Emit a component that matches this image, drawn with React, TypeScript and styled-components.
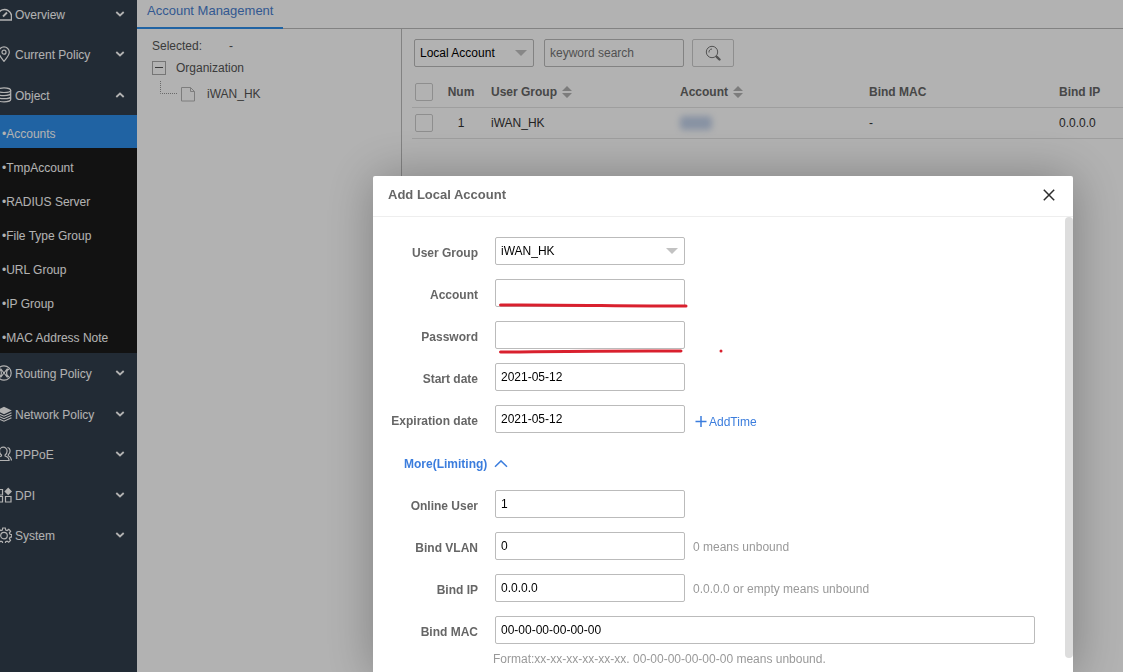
import React from "react";
import styled, { createGlobalStyle } from "styled-components";

const GlobalStyle = createGlobalStyle`
  *, *::before, *::after { box-sizing: border-box; }
  body {
    margin: 0;
    overflow: hidden;
    background: #fff;
    color: #555;
    font: 12px/18px "Liberation Sans", Arial, sans-serif;
  }
  button, input, select { font: inherit; }
  ul { list-style: none; margin: 0; padding: 0; }
`;

const Page = styled.div`
  display: flex;
  height: 100vh;
`;

/* ---------- sidebar ---------- */

const Sidebar = styled.nav`
  flex: 0 0 137px;
  overflow: hidden;
  background: #323e4c;
`;

const Menu = styled.ul`
  margin: -6px 0 0 -4px;
`;

const MenuItem = styled.li`
  &:nth-child(2n + 3) > button { height: 41px; }
`;

const MenuButton = styled.button`
  display: flex;
  align-items: center;
  width: 100%;
  height: 40px;
  padding: 0 12px 0 0;
  border: 0;
  background: none;
  color: #fff;
  text-align: left;
  cursor: pointer;
`;

const MenuLabel = styled.span`
  flex: 1;
  padding: 2px 0 0 3px;
`;

const SubMenu = styled.ul`
  background: #1a1a1a;
`;

const SubItem = styled.li`
  height: 34px;
`;

const SubLink = styled.a<{ $active?: boolean }>`
  display: flex;
  align-items: center;
  height: 33px;
  padding: 4px 0 0 6px;
  background: ${(p) => (p.$active ? "#2e8fea" : "transparent")};
  color: #fff;
  text-decoration: none;
`;

const Glyph = styled.svg`
  flex: none;
  display: block;
  fill: none;
  stroke: currentColor;
`;

/* ---------- main area ---------- */

const Main = styled.main`
  flex: 1;
  min-width: 0;
  display: flex;
  flex-direction: column;
`;

const TabBar = styled.div`
  height: 29px;
  border-bottom: 1px solid #bbb;
`;

const Tab = styled.a`
  display: inline-block;
  height: 29px;
  padding: 2px 10px 0;
  border-bottom: 2px solid #2e8fea;
  color: #4a7fd0;
  font-size: 13px;
  text-decoration: none;
`;

const Columns = styled.div`
  flex: 1;
  display: flex;
  min-height: 0;
`;

const TreePanel = styled.aside`
  flex: 0 0 265px;
  padding: 8px 15px;
  border-right: 1px solid #bbb;
`;

const Selected = styled.div`
  display: flex;
  gap: 27px;
`;

const TreeRow = styled.div<{ $child?: boolean }>`
  display: flex;
  align-items: center;
  gap: ${(p) => (p.$child ? "12px" : "10px")};
  height: 26px;
  padding-left: ${(p) => (p.$child ? "7px" : "0")};
`;

const ChildIcons = styled.span`
  display: flex;
  gap: 4px;
`;

const ListPanel = styled.section`
  flex: 1;
  min-width: 0;
  overflow: hidden;
  padding: 10px 0 0 10px;
`;

const Toolbar = styled.form`
  display: flex;
  gap: 10px;
  padding: 0 0 10px 2px;
`;

const Field = styled.input<{ $w?: number }>`
  width: ${(p) => p.$w ?? 190}px;
  height: 28px;
  padding: 0 5px;
  border: 1px solid #bbb;
  border-radius: 2px;
  outline: 0;
  background: #fff;
  color: #000;
  &::placeholder { color: #757575; opacity: 1; }
`;

const SelectBox = styled.div<{ $w: number }>`
  display: grid;
  width: ${(p) => p.$w}px;
  > * { grid-area: 1 / 1; }
  > svg { align-self: center; justify-self: end; margin-right: 7px; pointer-events: none; }
`;

const Select = styled.select`
  width: 100%;
  height: 28px;
  padding: 0 5px;
  appearance: none;
  border: 1px solid #bbb;
  border-radius: 2px;
  background: #fff;
  color: #000;
`;

const SearchButton = styled.button`
  display: flex;
  align-items: center;
  justify-content: center;
  width: 42px;
  height: 28px;
  margin-left: -2px;
  padding: 0;
  border: 1px solid #ccc;
  border-radius: 2px;
  background: #fff;
  color: #777;
`;

const Table = styled.table`
  width: 100%;
  min-width: 827px;
  table-layout: fixed;
  border-collapse: separate;
  border-spacing: 0;
`;

const Col = styled.col<{ $w: number }>`
  width: ${(p) => p.$w}px;
`;

const cell = `
  height: 31px;
  padding: 0 8px;
  border-bottom: 1px solid #e2e2e2;
  text-align: left;
  white-space: nowrap;
  &:first-child { padding: 0 3px; }
  &:nth-child(2) { padding: 0; text-align: center; }
`;
const Th = styled.th`${cell} color: #666;`;
const Td = styled.td`${cell} color: #333;`;

const SortLabel = styled.span`
  display: inline-flex;
  align-items: center;
  gap: 5px;
`;

const Check = styled.input`
  display: block;
  appearance: none;
  width: 18px;
  height: 18px;
  margin: 0;
  border: 1px solid #ccc;
  border-radius: 2px;
  background: #fff;
`;

const Redacted = styled.span`
  display: block;
  width: 32px;
  height: 14px;
  border-radius: 4px;
  background: #c3d2ea;
  filter: blur(3px);
`;

/* ---------- dialog ---------- */

const Overlay = styled.div`
  position: fixed;
  inset: 0;
  display: flex;
  justify-content: flex-end;
  padding: 176px 50px 0;
  overflow: hidden;
  background: rgba(0, 0, 0, 0.3);
`;

const Dialog = styled.section`
  display: flex;
  flex-direction: column;
  width: 700px;
  min-height: 500px;
  border-radius: 2px;
  background: #fff;
  box-shadow: 1px 1px 50px rgba(0, 0, 0, 0.3);
`;

const DialogHeader = styled.header`
  display: flex;
  align-items: center;
  justify-content: space-between;
  height: 41px;
  padding: 0 17px 2px 15px;
  border-bottom: 1px solid #eee;
`;

const DialogTitle = styled.h2`
  margin: 0;
  color: #666;
  font-size: 13px;
`;

const CloseButton = styled.button`
  display: flex;
  padding: 0;
  border: 0;
  background: none;
  color: #2d2d2d;
`;

const DialogBody = styled.div`
  position: relative;
  flex: 1;
  padding-top: 20px;
`;

const ScrollThumb = styled.div`
  position: absolute;
  top: 0;
  right: 0;
  width: 8px;
  height: 441px;
  border-radius: 4px;
  background: #ddd;
`;

const Marks = styled.svg`
  position: absolute;
  top: 80px;
  left: 120px;
  pointer-events: none;
`;

const Row = styled.div`
  display: flex;
  align-items: center;
  height: 28px;
  margin-bottom: 14px;
`;

const Label = styled.label`
  width: 105px;
  margin-right: 17px;
  padding-top: 4px;
  color: #666;
  font-weight: bold;
  text-align: right;
`;

const Hint = styled.span`
  padding: 2px 0 0 8px;
  color: #999;
`;

const Note = styled.p`
  margin: -8px 0 0 120px;
  color: #999;
`;

const AddTime = styled.button`
  display: flex;
  align-items: center;
  gap: 2px;
  padding: 6px 0 0 10px;
  border: 0;
  background: none;
  color: #3b7ddd;
`;

const More = styled.button`
  display: flex;
  align-items: center;
  gap: 7px;
  height: 29px;
  margin: 0 0 14px 31px;
  padding: 4px 0 0;
  border: 0;
  background: none;
  color: #3b7ddd;
  font-weight: bold;
`;

/* ---------- icons ---------- */

const icons: Record<string, React.ReactNode> = {
  Overview: (
    <>
      <path d="M2.500 14A7 7 0 1 1 15.500 9.500V14Z" strokeWidth="1.500" />
      <path d="M7 10.500L11 6.500" strokeWidth="1.800" />
    </>
  ),
  "Current Policy": (
    <>
      <path d="M8 15.300C5 11.700 2.700 9 2.700 6.200a5.300 5.300 0 0 1 10.600 0c0 2.800-2.300 5.500-5.300 9.100Z" />
      <circle cx="8" cy="6.200" r="2" />
    </>
  ),
  Object: (
    <>
      <ellipse cx="8" cy="3.200" rx="6.700" ry="2.300" />
      <path d="M1.300 3.200v9.300c0 1.300 2.900 2.300 6.700 2.300s6.700-1 6.700-2.300V3.200M1.300 6.300c0 1.300 2.900 2.300 6.700 2.300s6.700-1 6.700-2.300M1.300 9.400c0 1.300 2.900 2.300 6.700 2.300s6.700-1 6.700-2.300" />
    </>
  ),
  "Routing Policy": (
    <>
      <circle cx="8" cy="8" r="7.200" />
      <path d="M3 4.200C6.200 5 6.200 11 3 11.800M13 4.200C9.800 5 9.800 11 13 11.800M4.500 3.500l7 9M11.500 3.500l-7 9" />
    </>
  ),
  "Network Policy": (
    <>
      <path d="M8 .8L15.800 4.500 8 8.200 .2 4.500Z" fill="currentColor" stroke="none" />
      <path d="M.5 6.800L8 10.200l7.500-3.400M.5 9.300L8 12.700l7.500-3.400M.5 11.800L8 15.200l7.500-3.400" />
    </>
  ),
  PPPoE: (
    <>
      <path d="M5.500 9C4 8 3.500 6.500 3.500 5a3.800 3.800 0 0 1 7.600 0c0 1.500-.6 3-2 4v1c2.500.8 4 2 4 4.500H.5C.5 12 2.500 10.800 5.500 10Z" />
      <path d="M11.500 1.500c3 .5 3.500 5 .8 7.200v1c2 .8 3 2 3.200 4.800" />
    </>
  ),
  DPI: (
    <>
      <path d="M1 2.500h5.500V8H1ZM1 9.500h5.500V15H1ZM9.500 9.500H15V15H9.500Z" />
      <path d="M12.200 .6l3.800 3.800-3.800 3.800-3.800-3.800Z" fill="currentColor" stroke="none" />
    </>
  ),
  System: (
    <>
      <path d="M6.700 1h2.600l.4 2 1.400.6L12.800 2.400l1.800 1.800-1.200 1.700.6 1.400 1.700.3v2.300l-1.700.4-.6 1.400 1.100 1.700-1.800 1.800-1.600-1.100-1.400.6-.4 1.800H6.700l-.4-1.800-1.400-.6-1.700 1.100-1.800-1.800 1.200-1.700L2 10.300.3 9.900V7.600L2 7.300l.6-1.400-1.200-1.700 1.800-1.800 1.700 1.200L6.300 3Z" />
      <circle cx="8" cy="8.600" r="3.300" />
    </>
  ),
};

const MenuIcon = ({ name }: { name: string }) => (
  <Glyph width="16" height="16" viewBox="0 0 16 16" strokeWidth="1.200" aria-hidden="true">
    {icons[name]}
  </Glyph>
);

const Chevron = ({ up }: { up?: boolean }) => (
  <Glyph width="10" height="6" viewBox="0 0 10 6" strokeWidth="1.800" aria-hidden="true">
    <path d={up ? "M1.300 5L5 1.500 8.700 5" : "M1.300 1L5 4.500 8.700 1"} />
  </Glyph>
);

const Arrow = () => (
  <svg width="12" height="6" viewBox="0 0 12 6" aria-hidden="true">
    <path d="M0 0h12L6 6Z" fill="#c2c2c2" />
  </svg>
);

const SortIcon = () => (
  <svg width="10" height="12" viewBox="0 0 10 12" aria-hidden="true">
    <path d="M0 5h10L5 0ZM0 7h10L5 12Z" fill="#b2b2b2" />
  </svg>
);

/* ---------- content ---------- */

const subItems = [
  "Accounts",
  "TmpAccount",
  "RADIUS Server",
  "File Type Group",
  "URL Group",
  "IP Group",
  "MAC Address Note",
];

type FormRowProps = {
  id: string;
  label: string;
  value: string;
  width?: number;
  children?: React.ReactNode;
};

const FormRow = ({ id, label, value, width, children }: FormRowProps) => (
  <Row>
    <Label htmlFor={id}>{label}</Label>
    <Field id={id} $w={width} defaultValue={value} type={id === "password" ? "password" : "text"} />
    {children}
  </Row>
);

export default function App() {
  return (
    <>
      <GlobalStyle />
      <Page>
        <Sidebar>
          <Menu>
            {Object.keys(icons).map((name) => (
              <MenuItem key={name}>
                <MenuButton type="button">
                  <MenuIcon name={name} />
                  <MenuLabel>{name}</MenuLabel>
                  <Chevron up={name === "Object"} />
                </MenuButton>
                {name === "Object" && (
                  <SubMenu>
                    {subItems.map((item) => (
                      <SubItem key={item}>
                        <SubLink href="#" $active={item === "Accounts"}>•{item}</SubLink>
                      </SubItem>
                    ))}
                  </SubMenu>
                )}
              </MenuItem>
            ))}
          </Menu>
        </Sidebar>

        <Main>
          <TabBar>
            <Tab href="#">Account Management</Tab>
          </TabBar>
          <Columns>
            <TreePanel>
              <Selected>
                <span>Selected:</span>
                <span>-</span>
              </Selected>
              <TreeRow>
                <Glyph width="14" height="14" viewBox="0 0 14 14" aria-hidden="true">
                  <rect x=".5" y=".5" width="13" height="13" stroke="#aaa" />
                  <path d="M3 6.500h8" />
                </Glyph>
                <span>Organization</span>
              </TreeRow>
              <TreeRow $child>
                <ChildIcons>
                  <Glyph width="18" height="26" viewBox="0 0 18 26" aria-hidden="true">
                    <path d="M1.500 0v12.500H18" stroke="#999" strokeDasharray="1 1" />
                  </Glyph>
                  <Glyph width="14" height="26" viewBox="0 0 14 26" aria-hidden="true">
                    <path d="M.5 6.500h9l4 4v9.500H.5ZM9.500 6.500v4h4" stroke="#b4b4b4" />
                  </Glyph>
                </ChildIcons>
                <span>iWAN_HK</span>
              </TreeRow>
            </TreePanel>

            <ListPanel>
              <Toolbar>
                <SelectBox $w={120}>
                  <Select aria-label="Account type">
                    <option>Local Account</option>
                  </Select>
                  <Arrow />
                </SelectBox>
                <Field $w={140} placeholder="keyword search" aria-label="keyword search" />
                <SearchButton type="button" aria-label="Search">
                  <Glyph width="16" height="16" viewBox="0 0 16 16" aria-hidden="true">
                    <circle cx="7" cy="7" r="5.700" />
                    <path d="M4 7.500a3 3 0 0 1 3-3.500" />
                    <path d="M11 11l1 1" />
                    <path d="M11.800 11.800l2.700 2.700" strokeWidth="2.400" strokeLinecap="round" />
                  </Glyph>
                </SearchButton>
              </Toolbar>
              <Table>
                <colgroup>
                  <Col $w={27} />
                  <Col $w={44} />
                  <Col $w={189} />
                  <Col $w={189} />
                  <Col $w={190} />
                  <col />
                </colgroup>
                <thead>
                  <tr>
                    <Th><Check type="checkbox" aria-label="Select all" /></Th>
                    <Th>Num</Th>
                    <Th><SortLabel>User Group<SortIcon /></SortLabel></Th>
                    <Th><SortLabel>Account<SortIcon /></SortLabel></Th>
                    <Th>Bind MAC</Th>
                    <Th>Bind IP</Th>
                  </tr>
                </thead>
                <tbody>
                  <tr>
                    <Td><Check type="checkbox" aria-label="Select row 1" /></Td>
                    <Td>1</Td>
                    <Td>iWAN_HK</Td>
                    <Td><Redacted /></Td>
                    <Td>-</Td>
                    <Td>0.0.0.0</Td>
                  </tr>
                </tbody>
              </Table>
            </ListPanel>
          </Columns>
        </Main>
      </Page>

      <Overlay>
        <Dialog role="dialog" aria-labelledby="dialog-title">
          <DialogHeader>
            <DialogTitle id="dialog-title">Add Local Account</DialogTitle>
            <CloseButton type="button" aria-label="Close">
              <Glyph width="14" height="14" viewBox="0 0 14 14" strokeWidth="1.500" aria-hidden="true">
                <path d="M1.800 1.800l10.400 10.400M12.200 1.800L1.800 12.200" />
              </Glyph>
            </CloseButton>
          </DialogHeader>
          <DialogBody>
            <Row>
              <Label htmlFor="group">User Group</Label>
              <SelectBox $w={190}>
                <Select id="group">
                  <option>iWAN_HK</option>
                </Select>
                <Arrow />
              </SelectBox>
            </Row>
            <FormRow id="account" label="Account" value="" />
            <FormRow id="password" label="Password" value="" />
            <FormRow id="start" label="Start date" value="2021-05-12" />
            <FormRow id="expire" label="Expiration date" value="2021-05-12">
              <AddTime type="button">
                <Glyph width="12" height="12" viewBox="0 0 12 12" strokeWidth="1.500" aria-hidden="true">
                  <path d="M6 0v11M.5 5.500h11" />
                </Glyph>
                AddTime
              </AddTime>
            </FormRow>
            <More type="button">
              More(Limiting)
              <Glyph width="14" height="8" viewBox="0 0 14 8" strokeWidth="1.500" aria-hidden="true">
                <path d="M1 6.700L7 .9l6 5.800" />
              </Glyph>
            </More>
            <FormRow id="online" label="Online User" value="1" />
            <FormRow id="vlan" label="Bind VLAN" value="0">
              <Hint>0 means unbound</Hint>
            </FormRow>
            <FormRow id="ip" label="Bind IP" value="0.0.0.0">
              <Hint>0.0.0.0 or empty means unbound</Hint>
            </FormRow>
            <FormRow id="mac" label="Bind MAC" value="00-00-00-00-00-00" width={540} />
            <Note>Format:xx-xx-xx-xx-xx-xx. 00-00-00-00-00-00 means unbound.</Note>
            <Marks width="240" height="60" viewBox="0 0 240 60" fill="none" stroke="#d9202e" strokeWidth="3" strokeLinecap="round" aria-hidden="true">
              <path d="M7.500 8C60 7.500 130 9 193 9" />
              <path d="M7.500 55C60 54.500 120 53.500 188 54" />
              <circle cx="228" cy="54" r="1.500" fill="#d9202e" stroke="none" />
            </Marks>
            <ScrollThumb />
          </DialogBody>
        </Dialog>
      </Overlay>
    </>
  );
}
